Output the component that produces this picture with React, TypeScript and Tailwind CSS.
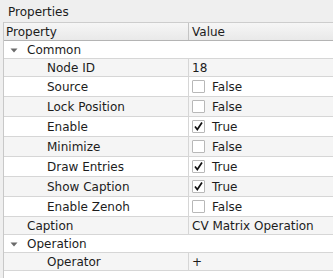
import React from "react";

type Row =
  | { kind: "cat"; label: string; h: number; alt: boolean }
  | { kind: "prop"; label: string; indent: number; value?: string; check?: boolean; h: number; alt: boolean };

const rows: Row[] = [
  { kind: "cat", label: "Common", h: 18, alt: false },
  { kind: "prop", label: "Node ID", indent: 47, value: "18", h: 18, alt: true },
  { kind: "prop", label: "Source", indent: 47, value: "False", check: false, h: 20, alt: false },
  { kind: "prop", label: "Lock Position", indent: 47, value: "False", check: false, h: 20, alt: true },
  { kind: "prop", label: "Enable", indent: 47, value: "True", check: true, h: 20, alt: false },
  { kind: "prop", label: "Minimize", indent: 47, value: "False", check: false, h: 20, alt: true },
  { kind: "prop", label: "Draw Entries", indent: 47, value: "True", check: true, h: 20, alt: false },
  { kind: "prop", label: "Show Caption", indent: 47, value: "True", check: true, h: 20, alt: true },
  { kind: "prop", label: "Enable Zenoh", indent: 47, value: "False", check: false, h: 20, alt: false },
  { kind: "prop", label: "Caption", indent: 27, value: "CV Matrix Operation", h: 18, alt: true },
  { kind: "cat", label: "Operation", h: 18, alt: false },
  { kind: "prop", label: "Operator", indent: 47, value: "+", h: 18, alt: true },
];

function Arrow() {
  return (
    <svg width="8" height="5" viewBox="0 0 8 5" className="block">
      <path d="M0.5 0.5 L7.5 0.5 L4 4.5 Z" fill="#6a6a6a" />
    </svg>
  );
}

function CheckBox({ checked }: { checked: boolean }) {
  return (
    <div className="w-[13px] h-[13px] border border-[#b8b8b8] bg-white rounded-[1px] flex items-center justify-center shrink-0">
      {checked && (
        <svg width="11" height="11" viewBox="0 0 11 11">
          <path d="M2 5.5 L4.3 8.5 L9 1.5" fill="none" stroke="#111" strokeWidth="1.7" />
        </svg>
      )}
    </div>
  );
}

export default function App() {
  return (
    <div
      className="w-[333px] h-[278px] bg-[#efefef] overflow-hidden text-[12px] text-[#1c1c1c] leading-none"
      style={{ fontFamily: "'DejaVu Sans', sans-serif" }}
    >
      <div className="h-[22px] pl-[8px] pt-[6px]">Properties</div>
      <div className="ml-[3px] border-l border-[#c8c8c8] bg-white h-[256px]">
        <div className="h-[19px] flex border-t border-b border-t-[#cdcdcd] border-b-[#b4b4b4] bg-gradient-to-b from-[#f6f6f6] to-[#e9e9e9]">
          <div className="w-[185px] border-r border-[#c4c4c4] flex items-center pl-[2px] pt-[1px]">Property</div>
          <div className="flex-1 flex items-center pl-[3px] pt-[1px]">Value</div>
        </div>
        {rows.map((r, i) => (
          <div
            key={i}
            className={`flex border-b border-[#d6d6d6] ${r.alt ? "bg-[#f5f5f5]" : "bg-white"}`}
            style={{ height: r.h }}
          >
            {r.kind === "cat" ? (
              <div className="flex items-center w-full pt-[1px]">
                <div className="w-[23px] pl-[6px] flex items-center">
                  <Arrow />
                </div>
                <span>{r.label}</span>
              </div>
            ) : (
              <>
                <div className="w-[185px] border-r border-[#d6d6d6] flex items-center pt-[1px]" style={{ paddingLeft: r.indent - 4 }}>
                  {r.label}
                </div>
                <div className="flex-1 flex items-center pl-[3px] gap-[7px]">
                  {r.check !== undefined && <CheckBox checked={r.check} />}
                  <span className="pt-[1px]">{r.value}</span>
                </div>
              </>
            )}
          </div>
        ))}
      </div>
    </div>
  );
}
